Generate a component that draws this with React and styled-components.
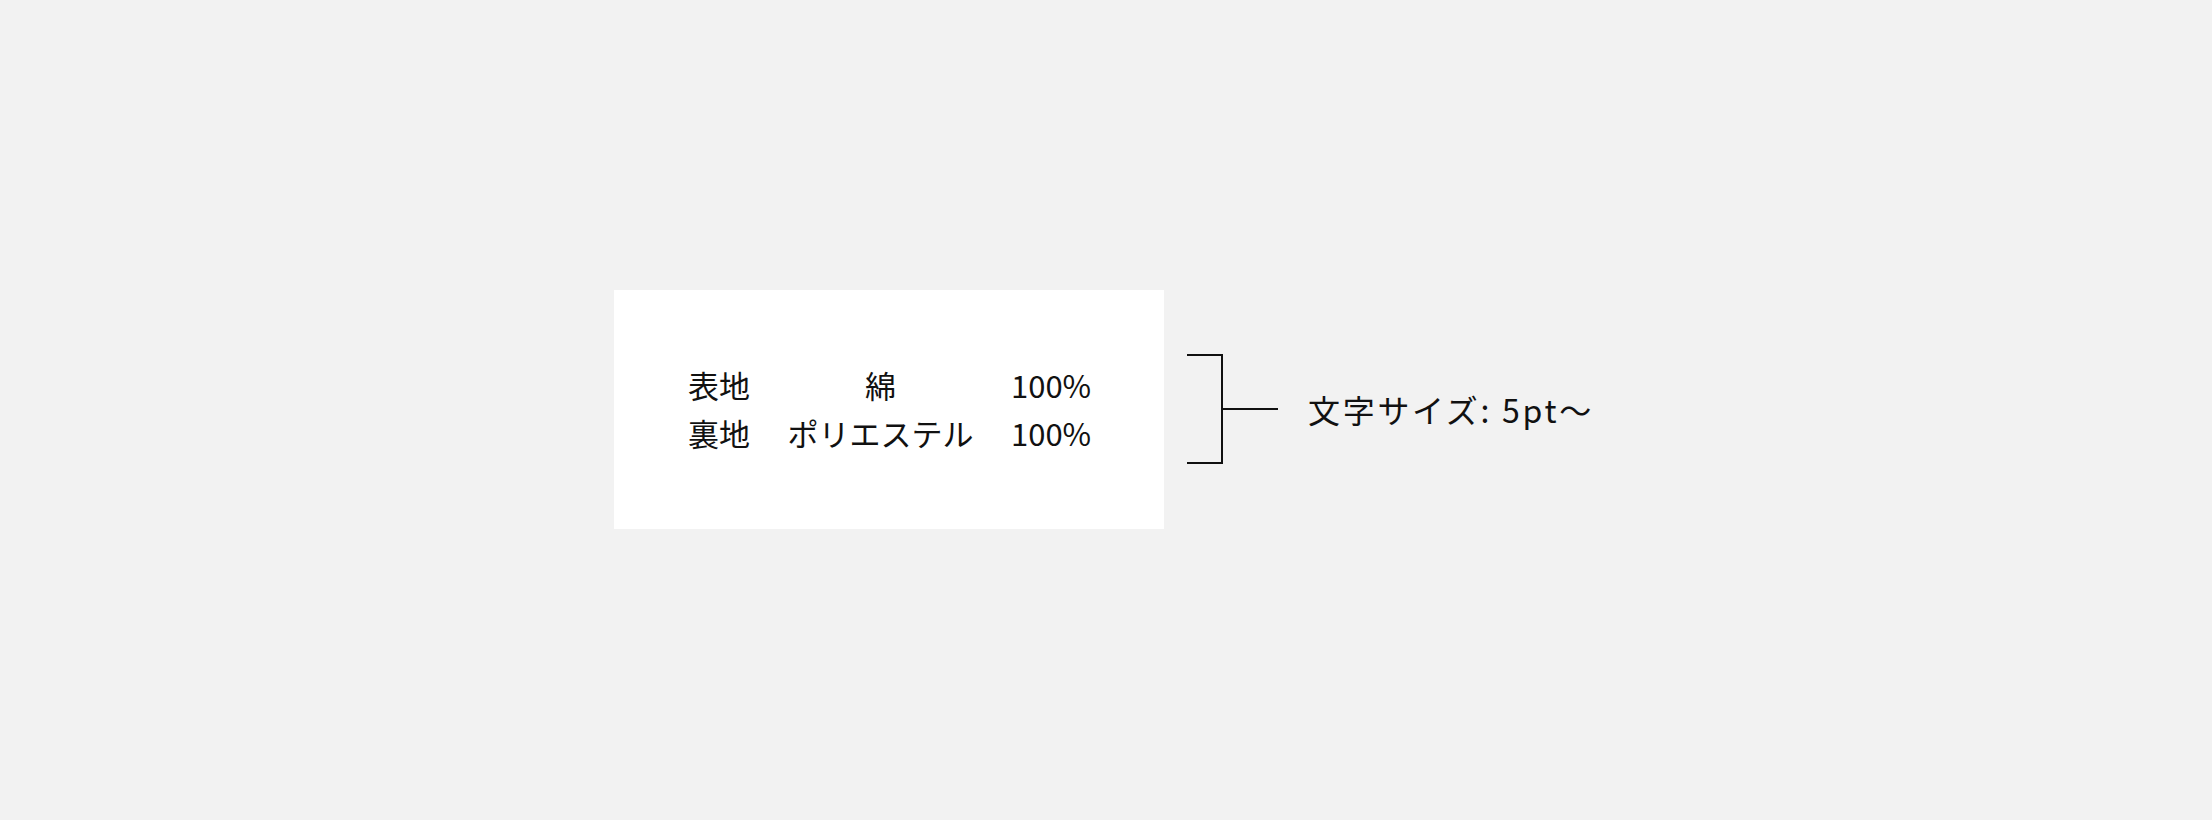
import React from 'react';
import styled, { createGlobalStyle } from 'styled-components';

const GlobalStyle = createGlobalStyle`
  body {
    margin: 0;
    padding: 0;
    background: #f2f2f2;
    font-family: "Noto Sans CJK JP", "Noto Sans", sans-serif;
    color: #111;
  }
`;

const Page = styled.div`
  display: flex;
  align-items: center;
  height: 820px;
  padding-left: 614px;
  padding-bottom: 2px;
  box-sizing: border-box;
`;

const LabelCard = styled.div`
  width: 550px;
  height: 239px;
  background: #fff;
  display: flex;
  align-items: center;
  justify-content: center;
`;

const Table = styled.div`
  display: grid;
  grid-template-columns: 62px 189px 79px;
  column-gap: 36px;
  row-gap: 10px;
  font-size: 31px;
  line-height: 38px;
`;

const Cell = styled.div`
  text-align: ${({ align }) => align || 'left'};
  white-space: nowrap;
`;

const Note = styled.div`
  display: flex;
  align-items: center;
  margin-left: 23px;
`;

const Bracket = styled.div`
  width: 34px;
  height: 106px;
  border: 2px solid #111;
  border-left: none;
`;

const Leader = styled.div`
  width: 55px;
  height: 2px;
  background: #111;
`;

const NoteText = styled.div`
  margin-left: 30px;
  font-size: 32px;
  letter-spacing: 2.7px;
  white-space: nowrap;
`;

const rows = [
  ['表地', '綿', '100%'],
  ['裏地', 'ポリエステル', '100%'],
];

const App = () => (
  <>
    <GlobalStyle />
    <Page>
      <LabelCard>
        <Table>
          {rows.map(([part, fabric, ratio]) => (
            <React.Fragment key={part}>
              <Cell>{part}</Cell>
              <Cell align="center">{fabric}</Cell>
              <Cell>{ratio}</Cell>
            </React.Fragment>
          ))}
        </Table>
      </LabelCard>
      <Note>
        <Bracket />
        <Leader />
        <NoteText>文字サイズ: 5pt〜</NoteText>
      </Note>
    </Page>
  </>
);

export default App;
